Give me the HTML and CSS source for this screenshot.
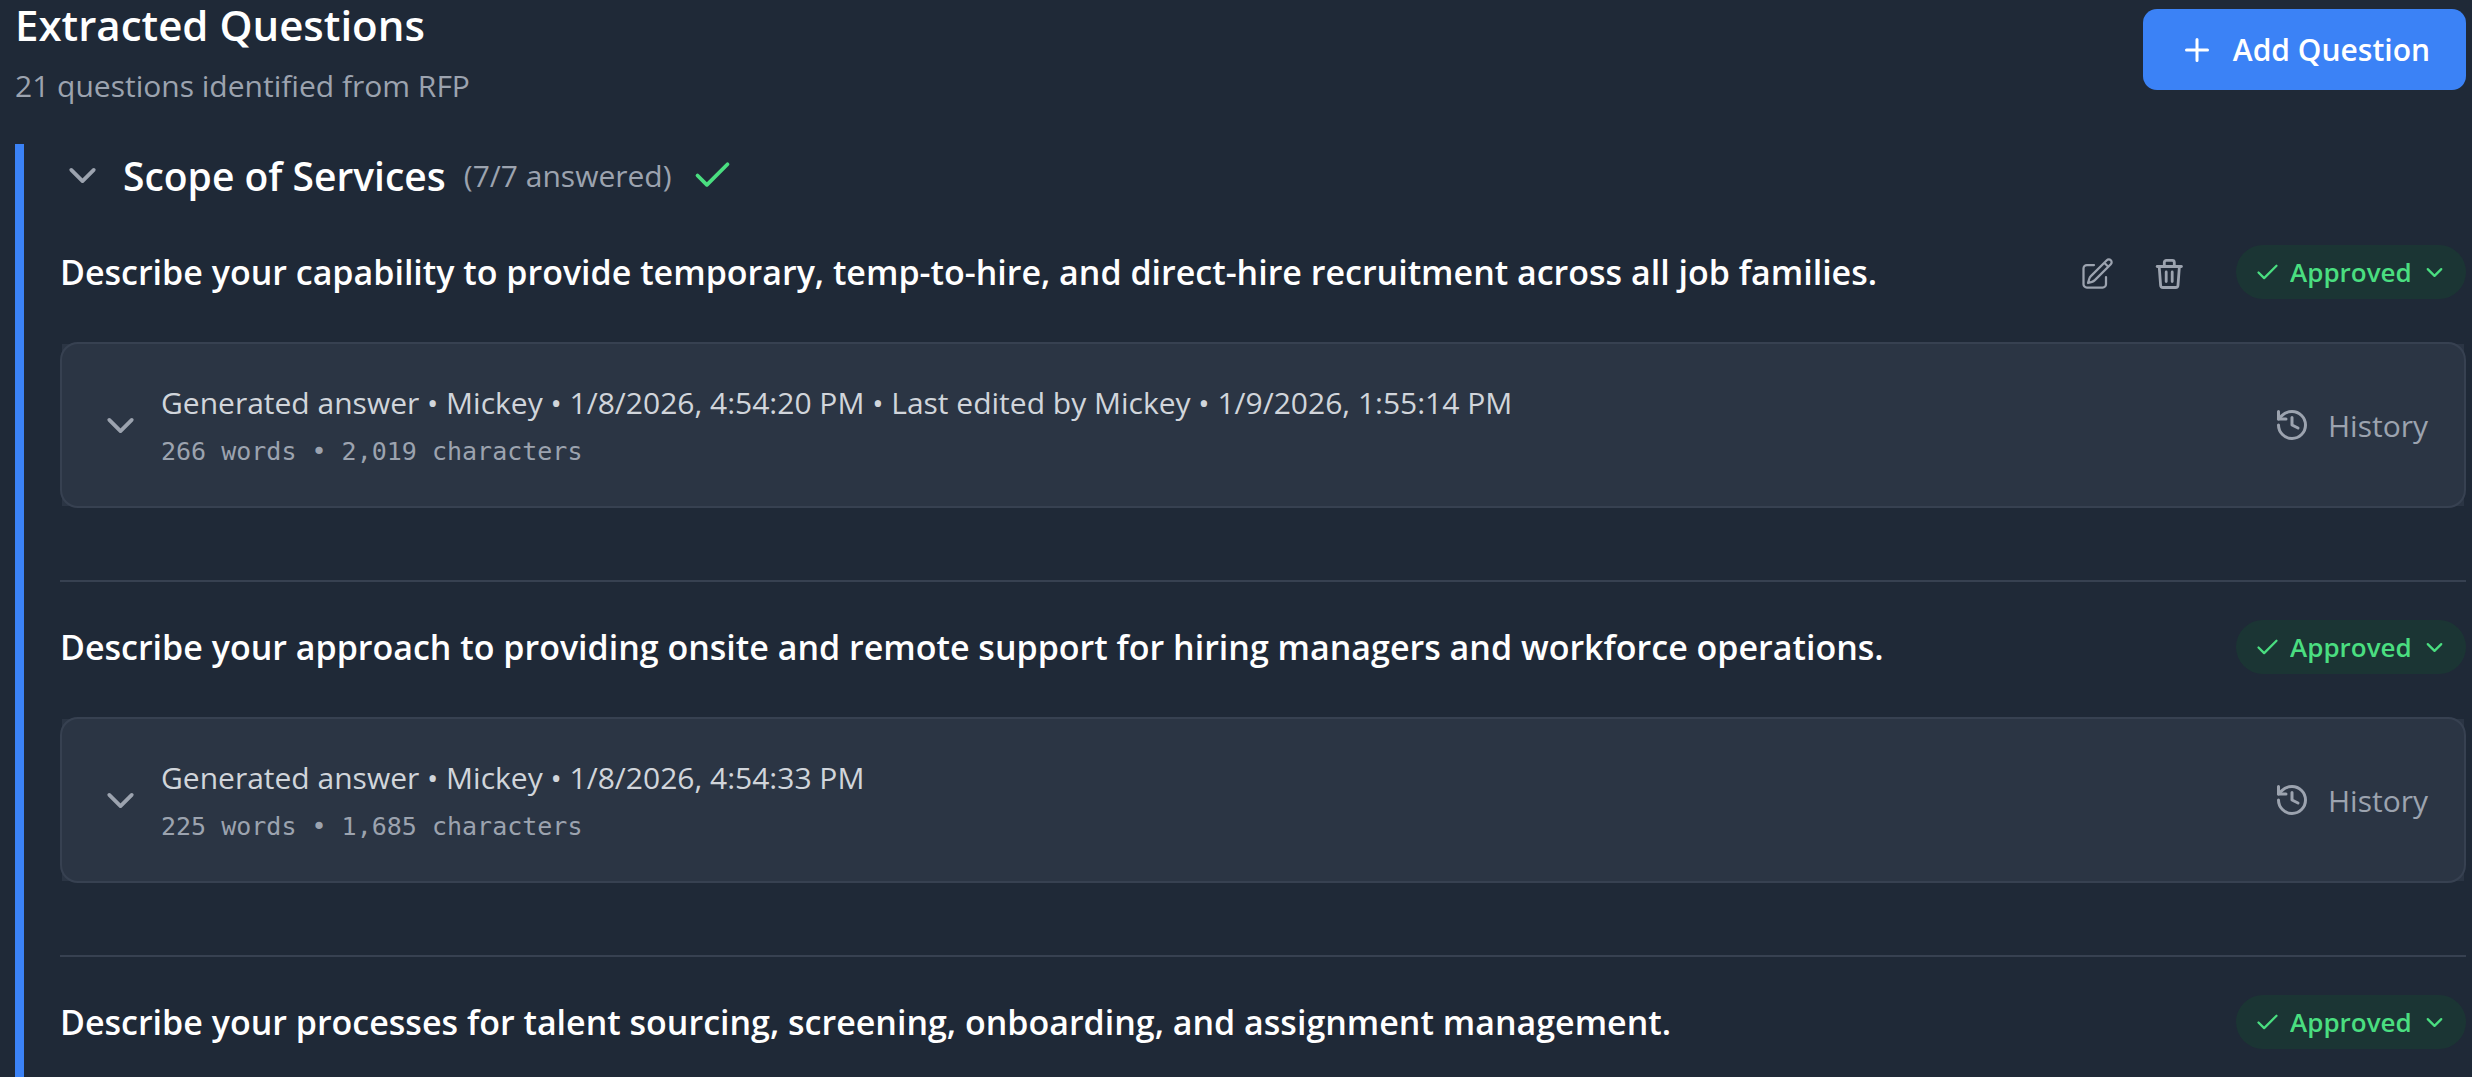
FILE: index.html
```html
<!DOCTYPE html>
<html lang="en">
<head>
    <meta charset="UTF-8">
    <meta name="viewport" content="width=device-width, initial-scale=1.0">
    <title>Extracted Questions</title>
    <link rel="stylesheet" href="styles.css">
</head>
<body>
    <!-- Shared icons -->
    <svg class="icon-defs" aria-hidden="true">
        <symbol id="icon-chevron" viewBox="0 0 24 24"><path d="m6 9 6 6 6-6"/></symbol>
        <symbol id="icon-check" viewBox="0 0 24 24"><path d="M20 6 9 17l-5-5"/></symbol>
        <symbol id="icon-plus" viewBox="0 0 24 24"><path d="M5 12h14M12 5v14"/></symbol>
        <symbol id="icon-history" viewBox="0 0 24 24"><path d="M3 12a9 9 0 1 0 9-9 9.75 9.75 0 0 0-6.74 2.74L3 8"/><path d="M3 3v5h5"/><path d="M12 7v5l4 2"/></symbol>
        <symbol id="icon-edit" viewBox="0 0 24 24"><path d="m16.862 4.487 1.687-1.688a1.875 1.875 0 1 1 2.652 2.652L10.582 16.07a4.5 4.5 0 0 1-1.897 1.13L6 18l.8-2.685a4.5 4.5 0 0 1 1.13-1.897l8.932-8.931Zm0 0L19.5 7.125M18 14v4.75A2.25 2.25 0 0 1 15.75 21H5.25A2.25 2.25 0 0 1 3 18.75V8.25A2.25 2.25 0 0 1 5.25 6H10"/></symbol>
        <symbol id="icon-trash" viewBox="0 0 36 36"><path d="M6.2 10.5h24.2"/><path d="M13.3 10V6.4a2 2 0 0 1 2-2h6a2 2 0 0 1 2 2V10"/><path d="m8.2 10.5 1.4 18.7a2.4 2.4 0 0 0 2.4 2.3h12.6a2.4 2.4 0 0 0 2.4-2.3l1.4-18.7"/><path d="M15.2 16v9.5M21.2 16v9.5"/></symbol>
    </svg>

    <header class="page-header">
        <div>
            <h1>Extracted Questions</h1>
            <p class="subtitle">21 questions identified from RFP</p>
        </div>
        <button type="button" class="add-btn">
            <svg class="icon"><use href="#icon-plus"/></svg>
            Add Question
        </button>
    </header>

    <main class="section">
        <div class="section-header">
            <button type="button" class="toggle-btn" aria-label="Collapse section">
                <svg class="icon icon-lg"><use href="#icon-chevron"/></svg>
            </button>
            <h2>Scope of Services</h2>
            <span class="answered">(7/7 answered)</span>
            <svg class="icon icon-lg icon-done"><use href="#icon-check"/></svg>
        </div>

        <article class="question">
            <div class="question-row">
                <h3>Describe your capability to provide temporary, temp-to-hire, and direct-hire recruitment across all job families.</h3>
                <div class="actions">
                    <button type="button" class="icon-btn" aria-label="Edit question">
                        <svg class="icon icon-edit"><use href="#icon-edit"/></svg>
                    </button>
                    <button type="button" class="icon-btn" aria-label="Delete question">
                        <svg class="icon icon-trash"><use href="#icon-trash"/></svg>
                    </button>
                </div>
                <label class="status">
                    <svg class="icon icon-sm"><use href="#icon-check"/></svg>
                    <select aria-label="Status"><option>Approved</option></select>
                    <svg class="icon icon-sm"><use href="#icon-chevron"/></svg>
                </label>
            </div>
            <div class="answer">
                <div class="answer-header">
                    <button type="button" class="toggle-btn" aria-label="Expand answer">
                        <svg class="icon icon-lg"><use href="#icon-chevron"/></svg>
                    </button>
                    <div class="answer-info">
                        <p class="meta">Generated answer • Mickey • 1/8/2026, 4:54:20 PM • Last edited by Mickey • 1/9/2026, 1:55:14 PM</p>
                        <p class="counts">266 words • 2,019 characters</p>
                    </div>
                    <button type="button" class="history-btn">
                        <svg class="icon"><use href="#icon-history"/></svg>
                        History
                    </button>
                </div>
            </div>
        </article>

        <article class="question">
            <div class="question-row">
                <h3>Describe your approach to providing onsite and remote support for hiring managers and workforce operations.</h3>
                <label class="status">
                    <svg class="icon icon-sm"><use href="#icon-check"/></svg>
                    <select aria-label="Status"><option>Approved</option></select>
                    <svg class="icon icon-sm"><use href="#icon-chevron"/></svg>
                </label>
            </div>
            <div class="answer">
                <div class="answer-header">
                    <button type="button" class="toggle-btn" aria-label="Expand answer">
                        <svg class="icon icon-lg"><use href="#icon-chevron"/></svg>
                    </button>
                    <div class="answer-info">
                        <p class="meta">Generated answer • Mickey • 1/8/2026, 4:54:33 PM</p>
                        <p class="counts">225 words • 1,685 characters</p>
                    </div>
                    <button type="button" class="history-btn">
                        <svg class="icon"><use href="#icon-history"/></svg>
                        History
                    </button>
                </div>
            </div>
        </article>

        <article class="question">
            <div class="question-row">
                <h3>Describe your processes for talent sourcing, screening, onboarding, and assignment management.</h3>
                <label class="status">
                    <svg class="icon icon-sm"><use href="#icon-check"/></svg>
                    <select aria-label="Status"><option>Approved</option></select>
                    <svg class="icon icon-sm"><use href="#icon-chevron"/></svg>
                </label>
            </div>
        </article>
    </main>
</body>
</html>
```
FILE: styles.css
```css
:root {
    --bg: #1f2937;
    --line: #374151;
    --blue: #3b82f6;
    --green: #4ade80;
    --muted: #9ca3af;
    --light: #d1d5db;
}

* { box-sizing: border-box; }

body, h1, h2, h3, p { margin: 0; }

body {
    display: flex;
    flex-direction: column;
    min-height: 100vh;
    padding: 0 6px 0 15px;
    background: var(--bg);
    color: white;
    font-family: "Open Sans", "Noto Sans", sans-serif;
    font-size: 30px;
}

button, select {
    margin: 0;
    padding: 0;
    border: none;
    background: none;
    color: inherit;
    font: inherit;
    cursor: pointer;
}

h1, h2, h3 { font-weight: 600; }

/* Icons */
.icon-defs {
    position: absolute;
    width: 0;
    height: 0;
}

.icon {
    display: block;
    flex: none;
    width: 36px;
    height: 36px;
    fill: none;
    stroke: currentColor;
    stroke-width: 2;
    stroke-linecap: round;
    stroke-linejoin: round;
}

.icon-lg { width: 45px; height: 45px; }
.icon-sm { width: 27px; height: 27px; }
.icon-edit { stroke-width: 1.5; }
.icon-trash { stroke-width: 2.8; }
.icon-done { color: var(--green); }

/* Page header */
.page-header {
    display: flex;
    justify-content: space-between;
    align-items: flex-start;
    margin-bottom: 36px;
}

h1 {
    font-size: 42px;
    line-height: 50px;
    margin-bottom: 14px;
}

.subtitle {
    color: var(--muted);
    line-height: 44px;
}

.add-btn {
    display: flex;
    align-items: center;
    gap: 18px;
    margin-top: 9px;
    padding: 18px 36px;
    border-radius: 14px;
    background: var(--blue);
    font-weight: 600;
    line-height: 45px;
}

/* Section */
.section {
    flex: 1;
    padding-left: 36px;
    border-left: 9px solid var(--blue);
}

.section-header {
    display: flex;
    align-items: center;
    gap: 18px;
    padding: 9px 0;
}

h2 {
    font-size: 39px;
    line-height: 45px;
}

.toggle-btn, .answered { color: var(--muted); }

/* Questions */
.question {
    padding: 38px 0 72px;
    border-bottom: 2px solid var(--line);
}

.question:last-child {
    padding-bottom: 0;
    border-bottom: none;
}

.question-row {
    display: flex;
    align-items: center;
    gap: 40px;
}

h3 {
    flex: 1;
    font-size: 34px;
    line-height: 54px;
}

.actions {
    display: flex;
    gap: 18px;
    color: var(--muted);
}

.icon-btn { padding: 11px 9px 7px; }

.status {
    display: flex;
    align-items: center;
    gap: 9px;
    height: 54px;
    padding: 0 18px;
    border-radius: 27px;
    background: rgba(20, 83, 45, 0.3);
    color: var(--green);
}

.status select {
    appearance: none;
    font-size: 26px;
    font-weight: 600;
    line-height: 36px;
}

/* Answer card */
.answer {
    margin-top: 43px;
    border: 2px solid var(--line);
    border-radius: 18px;
}

.answer-header {
    display: flex;
    align-items: center;
    gap: 18px;
    padding: 36px;
    background: rgba(55, 65, 81, 0.5);
}

.answer-info { flex: 1; }

.meta {
    color: var(--light);
    line-height: 45px;
    margin-bottom: 9px;
}

.counts {
    color: var(--muted);
    font-family: "DejaVu Sans Mono", monospace;
    font-size: 25px;
    line-height: 36px;
}

.history-btn {
    display: flex;
    align-items: center;
    gap: 18px;
    color: var(--muted);
}
```
